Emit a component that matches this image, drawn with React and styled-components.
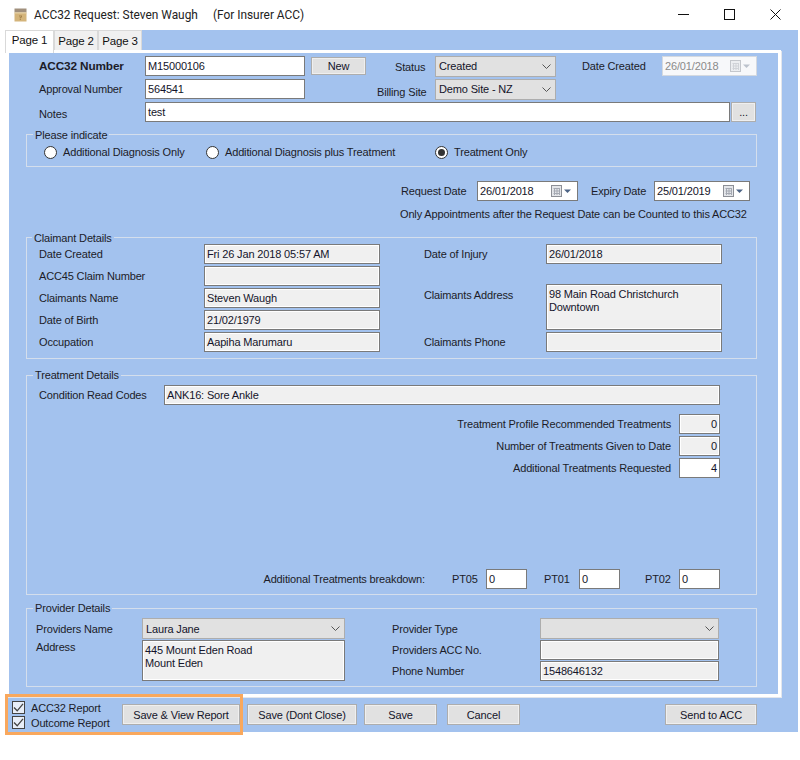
import styled, { createGlobalStyle } from "styled-components";

const GlobalStyle = createGlobalStyle`
  html, body {
    margin: 0;
    padding: 0;
    background: #fff;
  }
  * {
    box-sizing: border-box;
  }
`;

const Shell = styled.div`
  width: 800px;
  height: 760px;
  background: #fff;
  font-family: "Liberation Sans", Arial, sans-serif;
  font-size: 11px;
  letter-spacing: -0.15px;
  color: #1c1c28;
`;

const TitleBar = styled.div`
  height: 30px;
  display: flex;
  align-items: center;
  padding-left: 14px;
  font-family: Roboto, "Noto Sans", sans-serif;
  font-size: 11.9px;
  letter-spacing: 0;
  color: #222;
`;

const TitleText = styled.span`
  margin-left: ${(p) => p.$ml}px;
  white-space: pre;
`;

const WindowControls = styled.div`
  margin-left: auto;
  display: flex;
  align-items: center;
  padding: 0 2px 2px 0;
`;

const WindowControl = styled.button`
  width: 46px;
  height: 28px;
  padding: 0;
  border: none;
  background: none;
  display: flex;
  align-items: center;
  justify-content: center;
`;

const Client = styled.div`
  margin-left: 5px;
  width: 793px;
  height: 702px;
  background: #a3c2ee;
  display: flex;
  flex-direction: column;
`;

const TabRow = styled.div`
  height: 23px;
  display: flex;
  align-items: flex-end;
`;

const Tab = styled.div`
  position: relative;
  z-index: ${(p) => (p.$active ? 2 : 0)};
  width: ${(p) => p.$w}px;
  height: ${(p) => (p.$active ? 23 : 20)}px;
  margin-bottom: ${(p) => (p.$active ? 0 : 3)}px;
  background: ${(p) => (p.$active ? "#fff" : "#f0f0f0")};
  border: 1px solid #d9d9d9;
  border-bottom: none;
  display: flex;
  align-items: center;
  justify-content: center;
  padding-bottom: ${(p) => (p.$active ? 4 : 0)}px;
  font-size: 11.5px;
  color: #111;
`;

const TabPage = styled.div`
  position: relative;
  z-index: 1;
  width: 776px;
  height: 647px;
  margin-top: -3px;
  border: 3px solid #fff;
  border-left-width: 4px;
  box-shadow: 1px 1px 0 #e3e6ec;
`;

const TopRows = styled.div`
  padding-top: 3px;
  display: flex;
  flex-direction: column;
  gap: 3px;
`;

const Row = styled.div`
  display: flex;
  align-items: ${(p) => p.$align || "center"};
  justify-content: ${(p) => p.$justify || "flex-start"};
  height: ${(p) => p.$h || 20}px;
  margin-top: ${(p) => p.$mt || 0}px;
  padding-left: ${(p) => p.$pl || 0}px;
  flex: none;
`;

const Label = styled.span`
  flex: none;
  display: block;
  width: ${(p) => (p.$w ? `${p.$w}px` : "auto")};
  margin-left: ${(p) => p.$ml || 0}px;
  margin-top: ${(p) => p.$mt || 0}px;
  font-size: ${(p) => (p.$bold ? "11.8px" : "inherit")};
  font-weight: ${(p) => (p.$bold ? 700 : 400)};
  white-space: nowrap;
`;

const TextBox = styled.div`
  flex: none;
  width: ${(p) => p.$w}px;
  height: ${(p) => p.$h || 20}px;
  margin-left: ${(p) => p.$ml || 0}px;
  padding: 3px 2px 0 2px;
  background: ${(p) => (p.$readOnly ? "#f0f0f0" : "#fff")};
  border: 1px solid #7a7a7a;
  box-shadow: ${(p) => (p.$readOnly ? "inset 1px 1px 0 #fff, inset -1px -1px 0 #fff" : "none")};
  line-height: 13px;
  text-align: ${(p) => p.$textAlign || "left"};
  white-space: pre-line;
  color: #14142a;
`;

const SelectBox = styled.div`
  flex: none;
  width: ${(p) => p.$w}px;
  height: 21px;
  padding: 0 4px 0 3px;
  background: #e1e1e1;
  border: 1px solid #adadad;
  display: flex;
  align-items: center;
  justify-content: space-between;
  color: #14142a;
`;

const DateBox = styled.div`
  flex: none;
  width: ${(p) => p.$w}px;
  height: 20px;
  padding: 0 6px 0 2px;
  background: ${(p) => (p.$disabled ? "#f7f8fa" : "#fff")};
  border: 1px solid ${(p) => (p.$disabled ? "#d4d9e0" : "#7a7a7a")};
  color: ${(p) => (p.$disabled ? "#8a8a8a" : "#14142a")};
  display: flex;
  align-items: center;
  justify-content: space-between;
`;

const Button = styled.button`
  flex: none;
  width: ${(p) => p.$w}px;
  height: ${(p) => p.$h || 21}px;
  margin-left: ${(p) => p.$ml || 0}px;
  padding: 0;
  background: #e1e1e1;
  border: 1px solid #adadad;
  box-shadow: inset 0 0 0 1px #efefef;
  font: inherit;
  letter-spacing: inherit;
  color: #14142a;
`;

const Group = styled.fieldset`
  width: 731px;
  min-width: 0;
  margin: ${(p) => p.$mt || 0}px 0 0 17px;
  padding: 0;
  border: 1px solid #d4deec;
`;

const GroupTitle = styled.legend`
  margin-left: ${(p) => p.$ml || 6}px;
  padding: 0 2px;
  height: 13px;
  line-height: ${(p) => p.$lh || 13}px;
`;

const RadioRow = styled.div`
  display: flex;
  align-items: center;
  height: 16px;
  margin: 3px 0 6px;
  padding-left: 17px;
`;

const RadioItem = styled.label`
  display: flex;
  align-items: center;
  gap: 6px;
  width: ${(p) => (p.$w ? `${p.$w}px` : "auto")};
`;

const Radio = styled.span`
  width: 13px;
  height: 13px;
  border: 1px solid #333;
  border-radius: 50%;
  background: #fff;
  display: flex;
  align-items: center;
  justify-content: center;

  &::after {
    content: "";
    display: ${(p) => (p.$checked ? "block" : "none")};
    width: 7px;
    height: 7px;
    border-radius: 50%;
    background: #333;
  }
`;

const Columns = styled.div`
  display: flex;
  align-items: flex-start;
  padding: ${(p) => p.$pt || 0}px 0 ${(p) => p.$pb || 6}px ${(p) => p.$pl || 12}px;
`;

const Column = styled.div`
  flex: none;
  display: flex;
  flex-direction: column;
  gap: ${(p) => p.$gap ?? 2}px;
  margin-left: ${(p) => p.$ml || 0}px;
`;

const TreatmentBody = styled.div`
  padding: 3px 36px 5px 12px;
`;

const NumberRows = styled.div`
  margin-top: 9px;
  display: flex;
  flex-direction: column;
  gap: 2px;
`;

const BottomBar = styled.div`
  position: relative;
  z-index: 3;
  height: 35px;
  display: flex;
  align-items: center;
  padding-left: 7px;
`;

const Checks = styled.div`
  width: 110px;
  height: 28px;
  display: flex;
  flex-direction: column;
  justify-content: space-between;
  margin-top: 1px;
`;

const CheckItem = styled.label`
  display: flex;
  align-items: center;
  gap: 6px;
  height: 13px;
`;

const CheckBox = styled.span`
  width: 13px;
  height: 13px;
  border: 1px solid #444;
  background: #e8eef8;
  display: flex;
  align-items: center;
  justify-content: center;
`;

const Highlight = styled.div`
  position: absolute;
  left: 0;
  top: -3px;
  width: 238px;
  height: 41px;
  border: 3px solid #f9a85d;
  pointer-events: none;
`;

const Chevron = () => (
  <svg width="9" height="5" viewBox="0 0 9 5" fill="none">
    <path d="M0.5 0.5 L4.5 4.5 L8.5 0.5" stroke="#555" strokeWidth="1" />
  </svg>
);

const CalendarIcon = ({ muted }) => (
  <svg width="20" height="12" viewBox="0 0 20 12" fill="none">
    <rect x="0.5" y="0.5" width="10" height="11" fill={muted ? "#eceef1" : "#e4e6ea"} stroke={muted ? "#c4c7cc" : "#8c8f96"} />
    <path d="M2.5 3.5H9M2.5 6H9M2.5 8.5H9M3.5 3V10M6 3V10M8.5 3V10" stroke={muted ? "#d0d3d8" : "#a5a9b2"} />
    <path d="M13 4.5H20L16.5 8Z" fill={muted ? "#bcc2cc" : "#4c6385"} />
  </svg>
);

const BoxIcon = () => (
  <svg width="13" height="14" viewBox="0 0 13 14">
    <rect x="0.5" y="0.5" width="12" height="4" fill="#a08f7c" />
    <rect x="0.5" y="4.5" width="12" height="9" fill="#d4b47a" />
    <rect x="0.5" y="4.5" width="12" height="1" fill="#e6d2a8" />
    <path d="M5 7.5H8V9.5H6.8V10.5H5.8V9H7V8.5H5Z M5.8 11H6.8V12H5.8Z" fill="#a3814a" />
  </svg>
);

const CheckMark = () => (
  <svg width="11" height="11" viewBox="0 0 11 11" fill="none">
    <path d="M1 5.5 L4.2 8.8 L10 1.8" stroke="#444" strokeWidth="1.3" />
  </svg>
);

const Field = ({ label, labelW, w, children }) => (
  <Row>
    <Label $w={labelW}>{label}</Label>
    <TextBox $w={w} $readOnly>{children}</TextBox>
  </Row>
);

const NumberRow = ({ label, value, readOnly }) => (
  <Row $justify="flex-end">
    <Label>{label}</Label>
    <TextBox $w={41} $ml={8} $readOnly={readOnly} $textAlign="right">{value}</TextBox>
  </Row>
);

const App = () => {
  return (
    <Shell>
      <GlobalStyle />
      <TitleBar>
        <BoxIcon />
        <TitleText $ml={7}>ACC32 Request: Steven Waugh</TitleText>
        <TitleText $ml={15}>(For Insurer ACC)</TitleText>
        <WindowControls>
          <WindowControl aria-label="Minimize">
            <svg width="11" height="11" viewBox="0 0 11 11"><path d="M0 5.5H11" stroke="#111" /></svg>
          </WindowControl>
          <WindowControl aria-label="Maximize">
            <svg width="11" height="11" viewBox="0 0 11 11"><rect x="0.5" y="0.5" width="10" height="10" fill="none" stroke="#111" /></svg>
          </WindowControl>
          <WindowControl aria-label="Close">
            <svg width="11" height="11" viewBox="0 0 11 11"><path d="M0.5 0.5L10.5 10.5M10.5 0.5L0.5 10.5" stroke="#111" /></svg>
          </WindowControl>
        </WindowControls>
      </TitleBar>

      <Client>
        <TabRow>
          <Tab $active $w={49}>Page 1</Tab>
          <Tab $w={44}>Page 2</Tab>
          <Tab $w={44}>Page 3</Tab>
        </TabRow>

        <TabPage>
          <TopRows>
            <Row $pl={30}>
              <Label $w={106} $bold>ACC32 Number</Label>
              <TextBox $w={160}>M15000106</TextBox>
              <Button $w={55} $h={18} $ml={6}>New</Button>
              <Label $w={40} $ml={29} $mt={2}>Status</Label>
              <SelectBox $w={121}>Created<Chevron /></SelectBox>
              <Label $w={80} $ml={26}>Date Created</Label>
              <DateBox $w={95} $disabled>26/01/2018<CalendarIcon muted /></DateBox>
            </Row>
            <Row $pl={30}>
              <Label $w={106}>Approval Number</Label>
              <TextBox $w={160}>564541</TextBox>
              <Label $w={58} $ml={72} $mt={6}>Billing Site</Label>
              <SelectBox $w={121}>Demo Site - NZ<Chevron /></SelectBox>
            </Row>
            <Row $pl={30}>
              <Label $w={106} $mt={4}>Notes</Label>
              <TextBox $w={585}>test</TextBox>
              <Button $w={25} $h={20} $ml={1}>...</Button>
            </Row>
          </TopRows>

          <Group $mt={6}>
            <GroupTitle $lh={15}>Please indicate</GroupTitle>
            <RadioRow>
              <RadioItem $w={162}><Radio />Additional Diagnosis Only</RadioItem>
              <RadioItem $w={229}><Radio />Additional Diagnosis plus Treatment</RadioItem>
              <RadioItem><Radio $checked />Treatment Only</RadioItem>
            </RadioRow>
          </Group>

          <Row $mt={14} $pl={392}>
            <Label $w={76}>Request Date</Label>
            <DateBox $w={101}>26/01/2018<CalendarIcon /></DateBox>
            <Label $w={63} $ml={13}>Expiry Date</Label>
            <DateBox $w={96}>25/01/2019<CalendarIcon /></DateBox>
          </Row>
          <Row $mt={5} $h={16} $pl={391}>
            <Label>Only Appointments after the Request Date can be Counted to this ACC32</Label>
          </Row>

          <Group $mt={9}>
            <GroupTitle $ml={5} $lh={15}>Claimant Details</GroupTitle>
            <Columns>
              <Column>
                <Field label="Date Created" labelW={165} w={176}>Fri 26 Jan 2018 05:57 AM</Field>
                <Field label="ACC45 Claim Number" labelW={165} w={176} />
                <Field label="Claimants Name" labelW={165} w={176}>Steven Waugh</Field>
                <Field label="Date of Birth" labelW={165} w={176}>21/02/1979</Field>
                <Field label="Occupation" labelW={165} w={176}>Aapiha Marumaru</Field>
              </Column>
              <Column $ml={44}>
                <Field label="Date of Injury" labelW={122} w={176}>26/01/2018</Field>
                <Row $mt={18} $h={46} $align="flex-start">
                  <Label $w={122} $mt={5}>Claimants Address</Label>
                  <TextBox $w={176} $h={46} $readOnly>{"98 Main Road Christchurch\nDowntown"}</TextBox>
                </Row>
                <Field label="Claimants Phone" labelW={122} w={176} />
              </Column>
            </Columns>
          </Group>

          <Group $mt={10}>
            <GroupTitle>Treatment Details</GroupTitle>
            <TreatmentBody>
              <Row>
                <Label $w={125}>Condition Read Codes</Label>
                <TextBox $w={556} $readOnly>ANK16: Sore Ankle</TextBox>
              </Row>
              <NumberRows>
                <NumberRow label="Treatment Profile Recommended Treatments" value="0" readOnly />
                <NumberRow label="Number of Treatments Given to Date" value="0" readOnly />
                <NumberRow label="Additional Treatments Requested" value="4" />
              </NumberRows>
              <Row $mt={91} $justify="flex-end">
                <Label>Additional Treatments breakdown:</Label>
                <Label $w={26} $ml={27}>PT05</Label>
                <TextBox $w={41} $ml={8}>0</TextBox>
                <Label $w={26} $ml={17}>PT01</Label>
                <TextBox $w={41} $ml={9}>0</TextBox>
                <Label $w={26} $ml={25}>PT02</Label>
                <TextBox $w={41} $ml={8}>0</TextBox>
              </Row>
            </TreatmentBody>
          </Group>

          <Group $mt={7}>
            <GroupTitle>Provider Details</GroupTitle>
            <Columns $pt={3} $pb={5} $pl={9}>
              <Column $gap={1}>
                <Row $h={21}>
                  <Label $w={106}>Providers Name</Label>
                  <SelectBox $w={203}>Laura Jane<Chevron /></SelectBox>
                </Row>
                <Row $h={41} $align="flex-start">
                  <Label $w={106} $mt={1}>Address</Label>
                  <TextBox $w={203} $h={41} $readOnly>{"445 Mount Eden Road\nMount Eden"}</TextBox>
                </Row>
              </Column>
              <Column $ml={47} $gap={1}>
                <Row $h={21}>
                  <Label $w={148}>Provider Type</Label>
                  <SelectBox $w={179}><span /><Chevron /></SelectBox>
                </Row>
                <Field label="Providers ACC No." labelW={148} w={179} />
                <Field label="Phone Number" labelW={148} w={179}>1548646132</Field>
              </Column>
            </Columns>
          </Group>
        </TabPage>

        <BottomBar>
          <Highlight />
          <Checks>
            <CheckItem><CheckBox><CheckMark /></CheckBox>ACC32 Report</CheckItem>
            <CheckItem><CheckBox><CheckMark /></CheckBox>Outcome Report</CheckItem>
          </Checks>
          <Button $w={118}>Save &amp; View Report</Button>
          <Button $w={110} $ml={7}>Save (Dont Close)</Button>
          <Button $w={73} $ml={7}>Save</Button>
          <Button $w={73} $ml={10}>Cancel</Button>
          <Button $w={92} $ml={145}>Send to ACC</Button>
        </BottomBar>
      </Client>
    </Shell>
  );
};

export default App;
